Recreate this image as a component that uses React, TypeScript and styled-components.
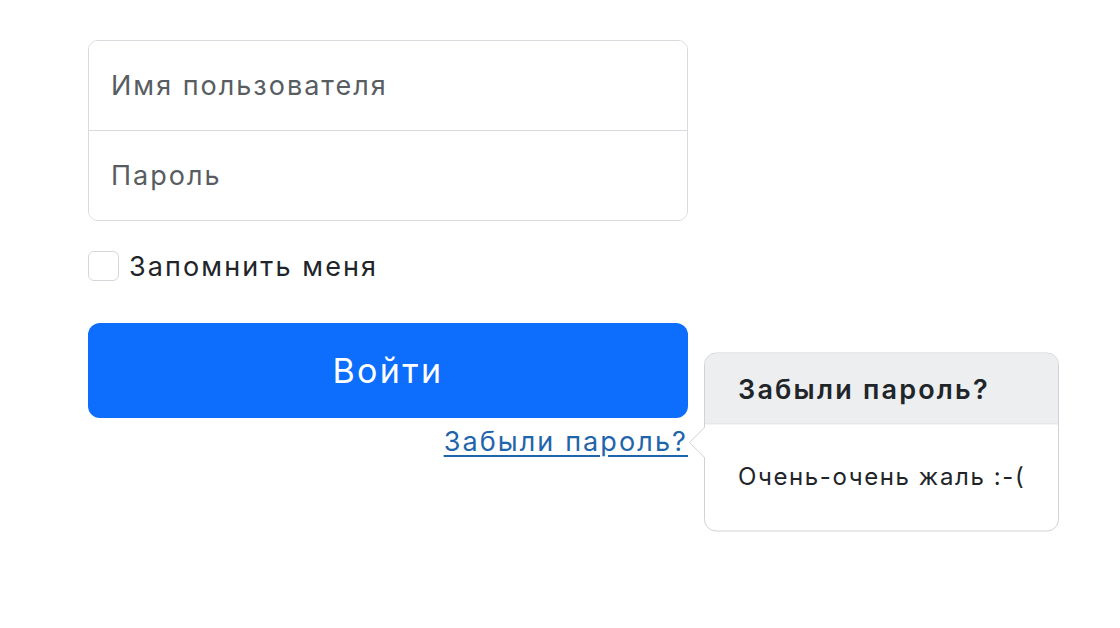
import React from "react";
import styled, { createGlobalStyle } from "styled-components";

const Global = createGlobalStyle`
  html, body { margin: 0; padding: 0; background: #ffffff; }
  body { font-family: Inter, "Liberation Sans", Arial, sans-serif; color: #212529; }
  * { box-sizing: border-box; }
`;

const Page = styled.div`
  padding: 40px 0 0 88px;
  width: 1120px;
  height: 628px;
`;

const Form = styled.form`
  width: 600px;
  display: flex;
  flex-direction: column;
`;

const InputGroup = styled.div`
  border: 1px solid #d7dbdf;
  border-radius: 10px;
  display: flex;
  flex-direction: column;
  overflow: hidden;
`;

const Field = styled.input<{ $divider?: boolean }>`
  height: ${(p) => (p.$divider ? 90 : 89)}px;
  border: none;
  border-bottom: ${(p) => (p.$divider ? "1px solid #d7dbdf" : "none")};
  padding: 0 22px;
  font-family: inherit;
  font-size: 27px;
  letter-spacing: 2px;
  color: #212529;
  outline: none;
  background: #fff;
  &::placeholder { color: #585d62; }
`;

const CheckRow = styled.label`
  display: flex;
  align-items: center;
  gap: 10px;
  margin-top: 30px;
  height: 30px;
  font-size: 27px;
  letter-spacing: 2.1px;
  color: #212529;
  white-space: nowrap;
`;

const Box = styled.span`
  width: 31px;
  height: 30px;
  border: 1px solid #d3d7dc;
  border-radius: 6px;
  background: #fff;
`;

const Submit = styled.button`
  margin-top: 42px;
  height: 95px;
  border: none;
  border-radius: 12px;
  background: #0d6efd;
  color: #ffffff;
  font-family: inherit;
  font-size: 34px;
  letter-spacing: 2.4px;
  cursor: pointer;
`;

const LinkRow = styled.div`
  display: flex;
  justify-content: flex-end;
  margin-top: 9px;
`;

const LinkWrap = styled.span`
  position: relative;
  display: inline-block;
  white-space: nowrap;
`;

const Link = styled.a`
  font-size: 27px;
  line-height: 30px;
  letter-spacing: 2.1px;
  color: #1f65ab;
  text-decoration: underline;
  text-underline-offset: 4px;
  cursor: pointer;
`;

const Popover = styled.div`
  position: absolute;
  left: calc(100% + 16px);
  top: 50%;
  transform: translateY(-50%);
  width: 355px;
  border: 1px solid #cfd3d7;
  border-radius: 12px;
  background: #fff;
  white-space: nowrap;
`;

const Arrow = styled.span`
  position: absolute;
  left: -16px;
  top: 50%;
  margin-top: -16px;
  width: 0;
  height: 0;
  border-top: 16px solid transparent;
  border-bottom: 16px solid transparent;
  border-right: 16px solid #cfd3d7;
  &::after {
    content: "";
    position: absolute;
    left: 1px;
    top: -15px;
    border-top: 15px solid transparent;
    border-bottom: 15px solid transparent;
    border-right: 15px solid #fff;
  }
`;

const PopHeader = styled.div`
  height: 71px;
  display: flex;
  align-items: center;
  padding: 0 33px;
  background: #eceef0;
  border-bottom: 1px solid #cfd3d7;
  border-radius: 11px 11px 0 0;
  font-size: 27px;
  font-weight: 600;
  letter-spacing: 2.2px;
  color: #212529;
`;

const PopBody = styled.div`
  height: 106px;
  display: flex;
  align-items: center;
  padding: 0 33px 4px;
  font-size: 24px;
  letter-spacing: 1.6px;
  color: #212529;
`;

export default function App() {
  return (
    <Page>
      <Global />
      <Form onSubmit={(e) => e.preventDefault()}>
        <InputGroup>
          <Field $divider placeholder="Имя пользователя" />
          <Field type="password" placeholder="Пароль" />
        </InputGroup>
        <CheckRow>
          <Box />
          Запомнить меня
        </CheckRow>
        <Submit type="submit">Войти</Submit>
        <LinkRow>
          <LinkWrap>
            <Link>Забыли пароль?</Link>
            <Popover>
              <Arrow />
              <PopHeader>Забыли пароль?</PopHeader>
              <PopBody>Очень-очень жаль :-(</PopBody>
            </Popover>
          </LinkWrap>
        </LinkRow>
      </Form>
    </Page>
  );
}
